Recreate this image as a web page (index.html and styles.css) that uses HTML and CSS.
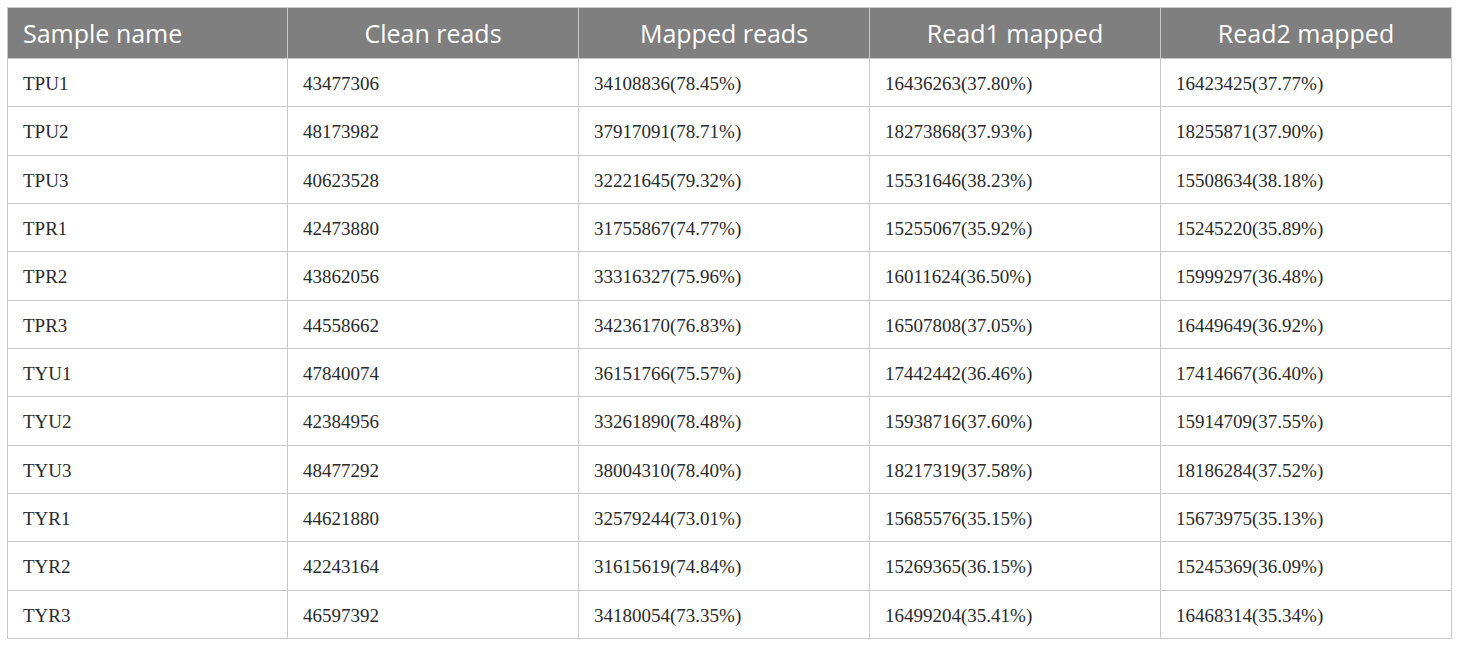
FILE: index.html
```html
<!DOCTYPE html>
<html>
<head>
<meta charset="utf-8">
<link rel="stylesheet" href="styles.css">
</head>
<body>
<table class="data">
<colgroup>
<col class="c1"><col class="c2"><col class="c2"><col class="c2"><col class="c2">
</colgroup>
<thead>
<tr><th class="first">Sample name</th><th>Clean reads</th><th>Mapped reads</th><th>Read1 mapped</th><th>Read2 mapped</th></tr>
</thead>
<tbody>
<tr><td>TPU1</td><td>43477306</td><td>34108836(78.45%)</td><td>16436263(37.80%)</td><td>16423425(37.77%)</td></tr>
<tr><td>TPU2</td><td>48173982</td><td>37917091(78.71%)</td><td>18273868(37.93%)</td><td>18255871(37.90%)</td></tr>
<tr><td>TPU3</td><td>40623528</td><td>32221645(79.32%)</td><td>15531646(38.23%)</td><td>15508634(38.18%)</td></tr>
<tr><td>TPR1</td><td>42473880</td><td>31755867(74.77%)</td><td>15255067(35.92%)</td><td>15245220(35.89%)</td></tr>
<tr><td>TPR2</td><td>43862056</td><td>33316327(75.96%)</td><td>16011624(36.50%)</td><td>15999297(36.48%)</td></tr>
<tr><td>TPR3</td><td>44558662</td><td>34236170(76.83%)</td><td>16507808(37.05%)</td><td>16449649(36.92%)</td></tr>
<tr><td>TYU1</td><td>47840074</td><td>36151766(75.57%)</td><td>17442442(36.46%)</td><td>17414667(36.40%)</td></tr>
<tr><td>TYU2</td><td>42384956</td><td>33261890(78.48%)</td><td>15938716(37.60%)</td><td>15914709(37.55%)</td></tr>
<tr><td>TYU3</td><td>48477292</td><td>38004310(78.40%)</td><td>18217319(37.58%)</td><td>18186284(37.52%)</td></tr>
<tr><td>TYR1</td><td>44621880</td><td>32579244(73.01%)</td><td>15685576(35.15%)</td><td>15673975(35.13%)</td></tr>
<tr><td>TYR2</td><td>42243164</td><td>31615619(74.84%)</td><td>15269365(36.15%)</td><td>15245369(36.09%)</td></tr>
<tr><td>TYR3</td><td>46597392</td><td>34180054(73.35%)</td><td>16499204(35.41%)</td><td>16468314(35.34%)</td></tr>
</tbody>
</table>
</body>
</html>
```
FILE: styles.css
```css
html, body {
  margin: 0;
  padding: 0;
  background: #ffffff;
}
body {
  padding: 7px 8px 0 7px;
}
.data {
  width: 1445px;
  border-collapse: collapse;
  table-layout: fixed;
  border: 1px solid #c9c9c9;
}
.c1 { width: 280px; }
.c2 { width: 291px; }
.data th {
  background: #7f7f7f;
  color: #ffffff;
  font-family: "Open Sans", "Noto Sans", sans-serif;
  font-weight: 400;
  font-size: 25px;
  height: 51px;
  padding: 0 15px;
  text-align: center;
  border: 1px solid #c9c9c9;
  border-top: none;
  box-sizing: border-box;
}
.data th.first {
  text-align: left;
}
.data td {
  font-family: "Liberation Serif", "Times New Roman", serif;
  font-size: 19px;
  color: #2a2a2a;
  height: 48.33px;
  padding: 3px 15px 0 15px;
  border: 1px solid #c9c9c9;
  box-sizing: border-box;
}
```
